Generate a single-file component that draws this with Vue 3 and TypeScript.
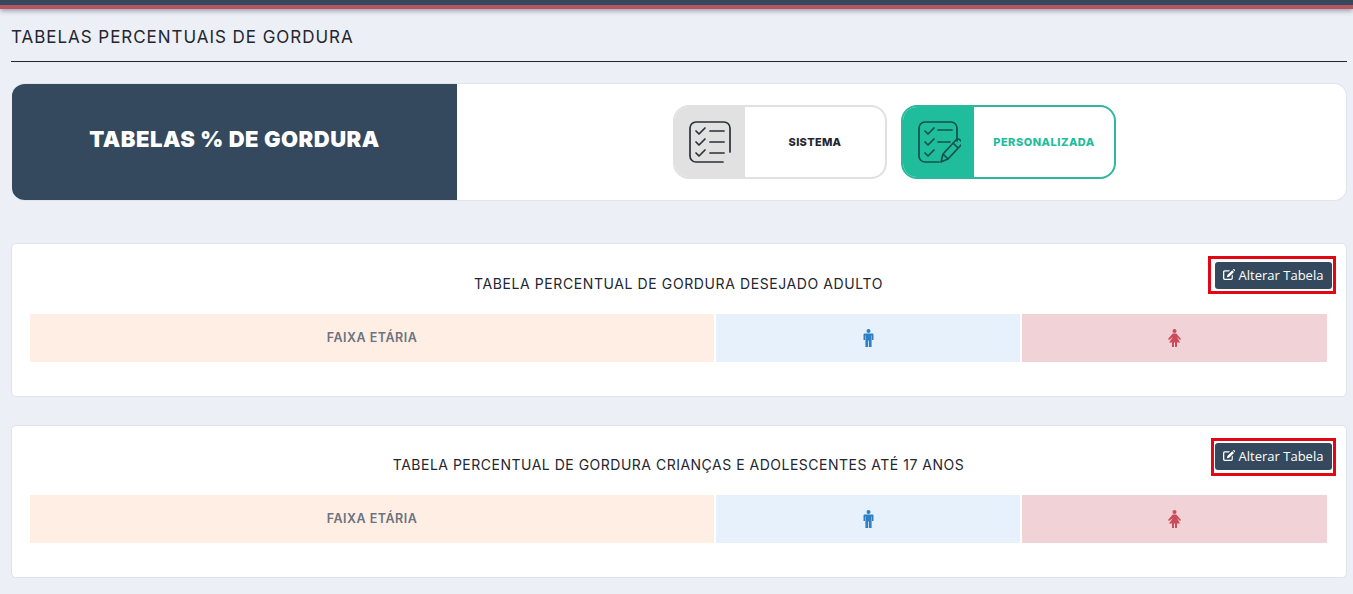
<script setup lang="ts">
const tables = [
  { title: 'TABELA PERCENTUAL DE GORDURA DESEJADO ADULTO', variant: 'first' },
  { title: 'TABELA PERCENTUAL DE GORDURA CRIANÇAS E ADOLESCENTES ATÉ 17 ANOS', variant: 'second' },
]
</script>

<template>
  <div class="page">
    <div class="topbar"></div>
    <main class="content">
      <h1 class="page-title">TABELAS PERCENTUAIS DE GORDURA</h1>
      <section class="hero">
        <div class="hero-left">TABELAS % DE GORDURA</div>
        <div class="hero-right">
          <div class="choice choice-grey">
            <div class="choice-icon">
              <svg width="44" height="44" viewBox="0 0 44 44" fill="none" stroke="#2b2f38" stroke-width="1.7" stroke-linecap="round" stroke-linejoin="round">
                <path d="M42 32V8a6 6 0 0 0-6-6H8a6 6 0 0 0-6 6v28a6 6 0 0 0 6 6h27" />
                <path d="M8 11l3 3 6-6M8 22l3 3 6-6M8 33l3 3 6-6" />
                <path d="M22 11h14M22 22h14M22 33h14" />
              </svg>
            </div>
            <div class="choice-label">SISTEMA</div>
          </div>
          <div class="choice choice-green">
            <div class="choice-icon">
              <svg width="44" height="44" viewBox="0 0 44 44" fill="none" stroke="#15514a" stroke-width="1.7" stroke-linecap="round" stroke-linejoin="round">
                <path d="M40 21V8a6 6 0 0 0-6-6H8a6 6 0 0 0-6 6v28a6 6 0 0 0 6 6h14" />
                <path d="M8 11l3 3 6-6M8 22l3 3 6-6M8 33l3 3 6-6" />
                <path d="M21 10h14M21 22h12" />
                <path d="M24 42l2-8 13-14a2.500 2.500 0 0 1 4 0l1 1a2.500 2.500 0 0 1 0 4L31 39zM26 34l5 5M36 23l5 5" />
              </svg>
            </div>
            <div class="choice-label">PERSONALIZADA</div>
          </div>
        </div>
      </section>

      <section v-for="t in tables" :key="t.title" class="table-card" :class="t.variant">
        <div class="card-head">
          <h2 class="card-title">{{ t.title }}</h2>
          <button class="edit-btn" type="button">
            <svg class="edit-icon" width="12" height="11" viewBox="0 0 12 11">
              <path fill="#fff" d="M1.700 1.300H7L5.900 2.400H2a.7.7 0 0 0-.7.7v6c0 .4.3.7.7.7h6c.4 0 .7-.3.7-.7V6.600l1.100-1.100v3.800c0 .9-.8 1.700-1.700 1.700H1.700C.8 11 0 10.200 0 9.300V3c0-.9.8-1.700 1.700-1.700z" />
              <path fill="#fff" d="M9.300 1.200l1.700 1.700-4.800 4.800-2.300.5.500-2.300zM9.900.6l.4-.4c.3-.3.7-.3 1 0l.7.7c.3.3.3.7 0 1l-.4.4z" />
            </svg>
            Alterar Tabela
          </button>
          <div class="marker"></div>
        </div>
        <div class="grid">
          <div class="cell cell-age">FAIXA ETÁRIA</div>
          <div class="cell cell-male">
            <svg width="11" height="18" viewBox="0 0 11 18" fill="#2f80c0">
              <circle cx="5.500" cy="2" r="2" />
              <path d="M1.800 4.500h7.400c.8 0 1.300.5 1.300 1.300v5.200H9V6.500h-.4V18H5.900v-6.500h-.8V18H2.400V6.500H2V11H.5V5.800c0-.8.500-1.300 1.300-1.300z" />
            </svg>
          </div>
          <div class="cell cell-female">
            <svg width="13" height="18" viewBox="0 0 13 18" fill="#cc4b5a">
              <circle cx="6.500" cy="2" r="2" />
              <path d="M4.700 4.500h3.600L13 10l-1 1-3-3L12 13.500H9V18H7V13.500H6V18H4V13.500H1L5 8 1 11 0 10z" />
            </svg>
          </div>
        </div>
      </section>
    </main>
  </div>
</template>

<style>
html, body {
  margin: 0;
  background: #eceff6;
}
</style>

<style scoped>
.page {
  width: 1353px;
  height: 594px;
  overflow: hidden;
  background: #eceff6;
  font-family: "Inter", "Liberation Sans", sans-serif;
  color: #23262f;
}
.topbar {
  height: 5px;
  background: #34495e;
  border-bottom: 4px solid #b5535f;
  box-shadow: 0 2px 5px rgba(60, 60, 70, 0.45);
}
.content {
  padding: 0 6px 0 11px;
}
.page-title {
  margin: 0;
  height: 53px;
  box-sizing: border-box;
  padding-top: 18px;
  font-size: 17px;
  line-height: 20px;
  font-weight: 400;
  letter-spacing: 0.96px;
  border-bottom: 1px solid #23262f;
}
.hero {
  display: flex;
  height: 118px;
  margin: 21px 0 42px 1px;
  box-sizing: border-box;
  background: #fff;
  border: 1px solid #e1e4ea;
  border-left: 0;
  border-radius: 13px;
  overflow: hidden;
}
.hero-left {
  width: 445px;
  display: flex;
  align-items: center;
  justify-content: center;
  padding-bottom: 6px;
  box-sizing: border-box;
  background: #34495e;
  color: #fff;
  font-size: 22px;
  font-weight: 900;
  letter-spacing: 0.5px;
}
.hero-right {
  flex: 1;
  display: flex;
  gap: 14px;
  padding: 21px 0 0 216px;
}
.choice {
  display: flex;
  height: 74px;
  box-sizing: border-box;
  border: 2px solid;
  border-radius: 16px;
  overflow: hidden;
}
.choice-grey {
  width: 214px;
  border-color: #e1e1e1;
}
.choice-green {
  width: 215px;
  border-color: #2db79c;
}
.choice-icon {
  width: 72px;
  margin: -2px 0 -2px -2px;
  padding-left: 2px;
  box-sizing: border-box;
  display: flex;
  align-items: center;
  justify-content: center;
}
.choice-grey .choice-icon {
  background: #e1e1e1;
}
.choice-green .choice-icon {
  width: 73px;
  background: #1fbd9c;
}
.choice-label {
  flex: 1;
  display: flex;
  align-items: center;
  justify-content: center;
  font-size: 11px;
  font-weight: 800;
  letter-spacing: 0.3px;
}
.choice-green .choice-label {
  color: #1fbd9c;
  letter-spacing: 0.5px;
}
.table-card {
  margin: 0 0 28px 0;
  height: 154px;
  box-sizing: border-box;
  padding: 0 19px 0 18px;
  background: #fff;
  border: 1px solid #dfe3ea;
  border-radius: 5px;
}
.second {
  height: 153px;
}
.card-head {
  position: relative;
  height: 70px;
}
.second .card-head {
  height: 69px;
}
.card-title {
  margin: 0;
  padding-top: 31px;
  text-align: center;
  font-size: 14px;
  line-height: 17px;
  font-weight: 400;
  letter-spacing: 0.6px;
  color: #23262f;
}
.second .card-title {
  padding-top: 30px;
  letter-spacing: 0.5px;
}
.edit-btn {
  position: absolute;
  top: 18px;
  right: -5px;
  width: 117px;
  height: 27px;
  padding: 0 1px 2px 0;
  display: flex;
  align-items: center;
  justify-content: center;
  gap: 4px;
  background: #34495e;
  color: #fff;
  border: 0;
  border-radius: 3px;
  font-family: "Open Sans", "Liberation Sans", sans-serif;
  font-size: 13px;
}
.second .edit-btn {
  top: 17px;
}
.marker {
  position: absolute;
  top: 12px;
  right: -9px;
  width: 128px;
  height: 38px;
  box-sizing: border-box;
  border: 3px solid #e30613;
}
.second .marker {
  top: 12px;
  width: 125px;
}
.grid {
  display: grid;
  grid-template-columns: 684px 304px 305px;
  gap: 2px;
  height: 48px;
}
.cell {
  display: flex;
  align-items: center;
  justify-content: center;
}
.cell-age {
  background: #feeee3;
  color: #6b7280;
  font-size: 12.500px;
  font-weight: 600;
  letter-spacing: 0.5px;
  padding-bottom: 1px;
  box-sizing: border-box;
}
.cell-male {
  background: #e6f1fb;
}
.cell-female {
  background: #f1d2d6;
}
</style>
